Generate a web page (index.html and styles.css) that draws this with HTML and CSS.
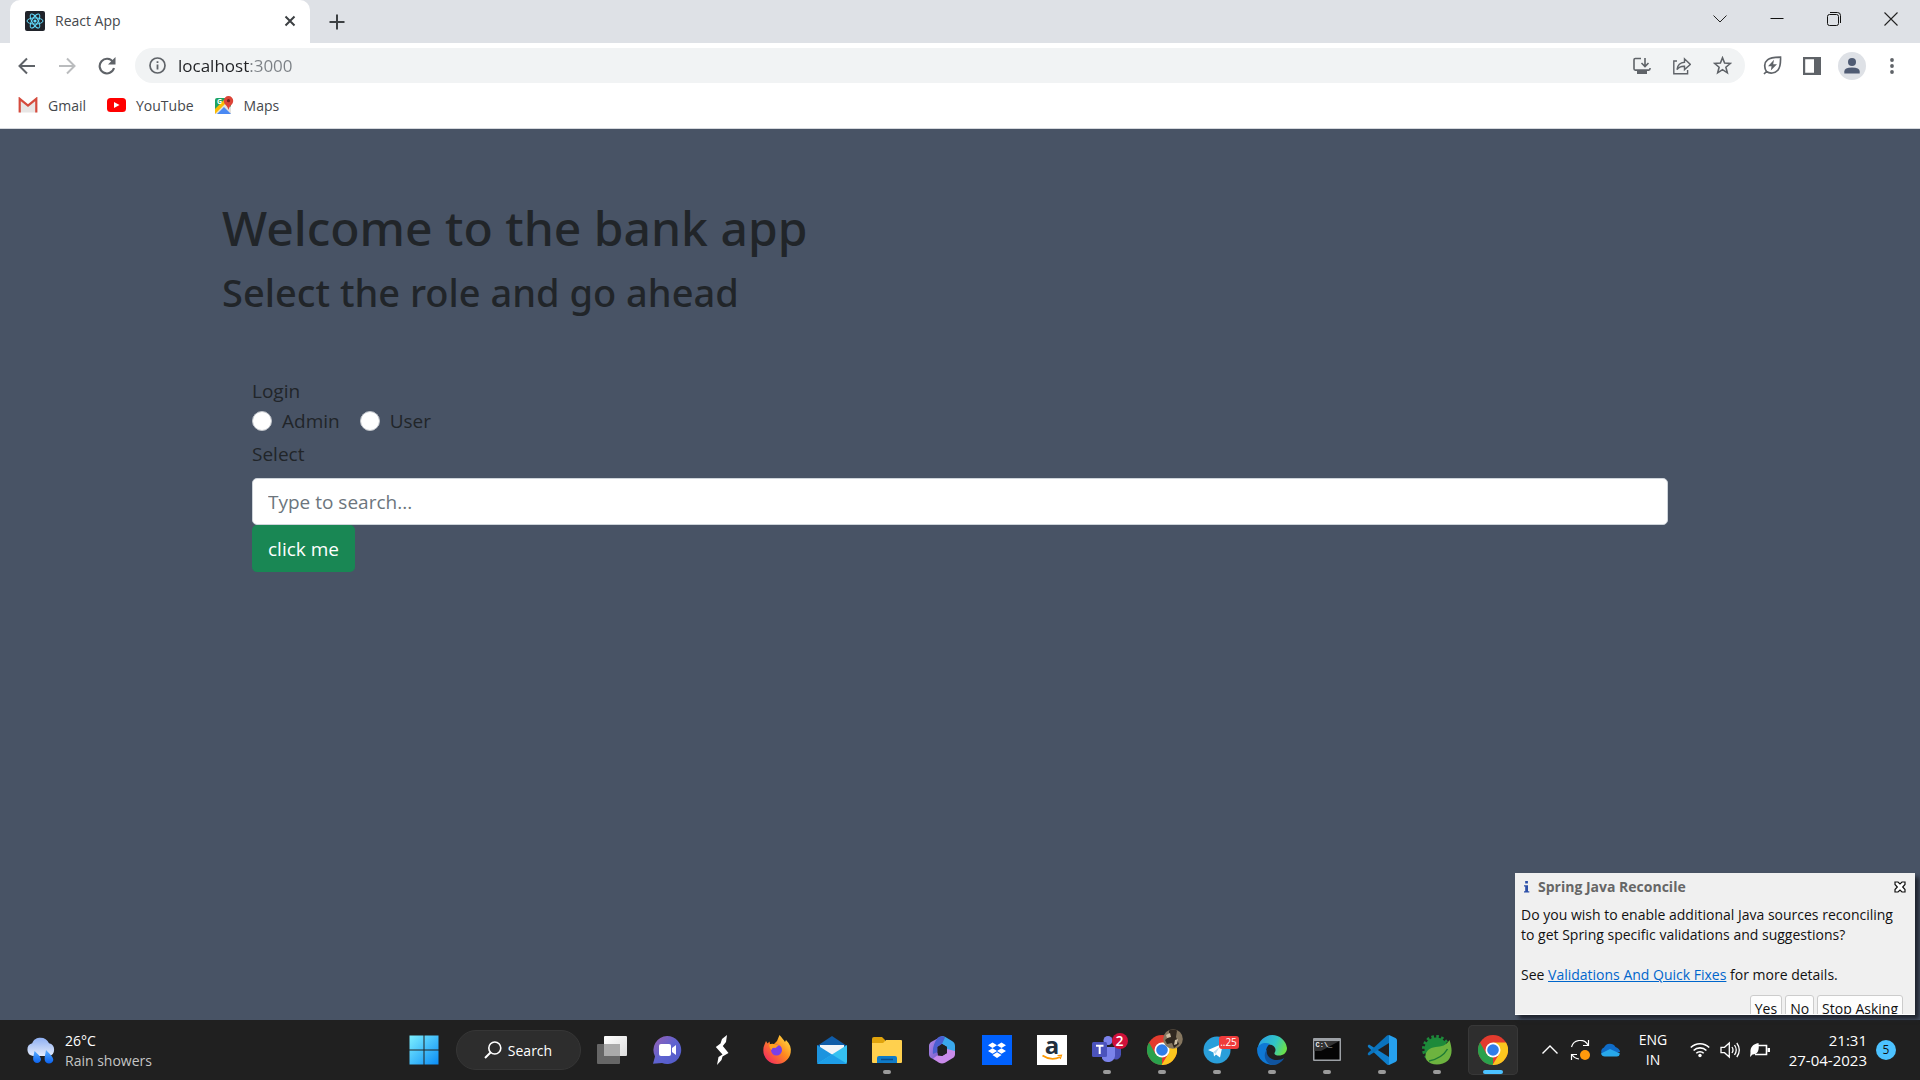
FILE: index.html
```html
<!DOCTYPE html>
<html lang="en">
<head>
<meta charset="utf-8">
<title>React App</title>
<link rel="stylesheet" href="styles.css">
</head>
<body>
<header class="browser">
  <div class="tabstrip">
    <div class="tab">
      <svg width="20" height="20" viewBox="0 0 20 20"><rect width="20" height="20" rx="2" fill="#20232a"/><g fill="none" stroke="#61dafb" stroke-width="1"><ellipse cx="10" cy="10" rx="8" ry="3.1"/><ellipse cx="10" cy="10" rx="8" ry="3.1" transform="rotate(60 10 10)"/><ellipse cx="10" cy="10" rx="8" ry="3.1" transform="rotate(120 10 10)"/></g><circle cx="10" cy="10" r="1.6" fill="#61dafb"/></svg>
      <span class="tab-title">React App</span>
      <button class="icon-btn tab-close" aria-label="Close tab"><svg width="12" height="12" viewBox="0 0 12 12"><path d="M1.5 1.5l9 9M10.500 1.500l-9 9" stroke="#3c4043" stroke-width="2"/></svg></button>
    </div>
    <button class="icon-btn new-tab" aria-label="New tab"><svg width="16" height="16" viewBox="0 0 16 16"><path d="M8 0.500v15M0.500 8h15" stroke="#3c4043" stroke-width="2"/></svg></button>
    <div class="window-controls">
      <button class="icon-btn" aria-label="Search tabs"><svg width="14" height="14" viewBox="0 0 14 14"><path d="M.5 3.500l6.500 6.500 6.500-6.500" fill="none" stroke="#222"/></svg></button>
      <button class="icon-btn" aria-label="Minimize"><svg width="14" height="14" viewBox="0 0 14 14"><path d="M.5 6.500h13" stroke="#111"/></svg></button>
      <button class="icon-btn" aria-label="Restore"><svg width="14" height="14" viewBox="0 0 14 14"><g fill="none" stroke="#111"><rect x=".5" y="2.500" width="11" height="11" rx="2"/><path d="M3 .5h7.500q3 0 3 3v7.500"/></g></svg></button>
      <button class="icon-btn" aria-label="Close"><svg width="14" height="14" viewBox="0 0 14 14"><path d="M.5.5l13 13M13.500.5l-13 13" stroke="#222" stroke-width="1.100"/></svg></button>
    </div>
  </div>
  <div class="toolbar">
    <nav class="nav-buttons">
      <button class="icon-btn" aria-label="Back"><svg width="18" height="18" viewBox="0 0 18 18"><path d="M17 9H2M9 1.500L1.500 9 9 16.500" fill="none" stroke="#5f6368" stroke-width="2"/></svg></button>
      <button class="icon-btn" aria-label="Forward"><svg width="18" height="18" viewBox="0 0 18 18"><path d="M1 9h15M9 1.500L16.500 9 9 16.500" fill="none" stroke="#babcbe" stroke-width="2"/></svg></button>
      <button class="icon-btn" aria-label="Reload"><svg width="18" height="18" viewBox="0 0 18 18"><path d="M15 5A7.300 7.300 0 1 0 16 11" fill="none" stroke="#5f6368" stroke-width="2.100"/><path d="M17.500 0v7.500H10z" fill="#5f6368"/></svg></button>
    </nav>
    <div class="omnibox">
      <svg width="17" height="17" viewBox="0 0 17 17"><circle cx="8.500" cy="8.500" r="7.500" fill="none" stroke="#5f6368" stroke-width="1.700"/><path d="M8.500 7.500v5M8.500 4.200v1.900" stroke="#5f6368" stroke-width="1.800"/></svg>
      <input class="url" type="text" value="localhost:3000" aria-label="Address">
      <div class="omni-actions">
        <button class="icon-btn" aria-label="Install"><svg width="18" height="18" viewBox="0 0 18 18"><g fill="none" stroke="#5f6368" stroke-width="1.600"><path d="M8 1.500H2.300q-1.300 0-1.300 1.300v9q0 1.300 1.300 1.300h13.400q1.300 0 1.300-1.300V11"/><path d="M12 1v8M8.500 6l3.500 3.500L15.500 6"/></g><path d="M4 13.500h10V17H4z" fill="#5f6368"/></svg></button>
        <button class="icon-btn" aria-label="Share"><svg width="18" height="18" viewBox="0 0 18 18"><g fill="none" stroke="#5f6368" stroke-width="1.400"><path d="M4 4H.8v12.700h13.800V13"/><path d="M4 12.500c.6-4.500 3-7 7.500-7.300V1.800l5.800 5.600-5.800 5.200V9.200C8 9 5.800 10 4 12.500z"/></g></svg></button>
        <button class="icon-btn" aria-label="Bookmark"><svg width="19" height="19" viewBox="0 0 19 19"><path d="M9.500 1.800l2.100 5.300 5.700.4-4.400 3.700 1.400 5.600-4.800-3.100-4.800 3.100 1.400-5.600L1.700 7.500l5.700-.4z" fill="none" stroke="#5f6368" stroke-width="1.600"/></svg></button>
      </div>
    </div>
    <div class="extensions">
      <button class="icon-btn" aria-label="Energy saver"><svg width="19" height="19" viewBox="0 0 19 19"><g fill="none" stroke="#5f6368" stroke-width="1.700"><path d="M3.500 15.500C1 12 1 6.500 4.500 3.800 7.500 1.300 12 1.300 17.500 1.200c.2 5.500.2 9.800-2.700 13-3 3.300-8 3.800-11.300 1.300zM3.500 15.500L1 18"/></g><path d="M11 3.800L5 10.200h3.600L7.800 14.500 14 8.200h-3.800z" fill="#5f6368"/></svg></button>
      <button class="icon-btn" aria-label="Side panel"><svg width="18" height="18" viewBox="0 0 18 18"><path d="M0 0h18v18H0zM2.200 2.200v13.600h8.800V2.200z" fill="#5f6368" fill-rule="evenodd"/></svg></button>
      <button class="icon-btn" aria-label="Profile"><svg width="28" height="28" viewBox="0 0 28 28"><circle cx="14" cy="14" r="14" fill="#dee1e6"/><circle cx="14" cy="10" r="4" fill="#4f5b73"/><path d="M6.300 21.500v-2q0-4 7.700-4t7.700 4v2z" fill="#4f5b73"/></svg></button>
      <button class="icon-btn" aria-label="Menu"><svg width="6" height="18" viewBox="0 0 6 18"><g fill="#5f6368"><circle cx="3" cy="3" r="1.900"/><circle cx="3" cy="9" r="1.900"/><circle cx="3" cy="15" r="1.900"/></g></svg></button>
    </div>
  </div>
  <nav class="bookmarks">
    <a href="#gmail"><svg width="20" height="16" viewBox="0 0 20 16"><path d="M1 2v12.500q0 1 1 1h16q1 0 1-1V2l-9 7z" fill="#e8e6e5"/><path d="M1.700 15.500V1.800L10 8.600l8.300-6.800v13.700" fill="none" stroke="#d54b3d" stroke-width="2.200"/></svg>Gmail</a>
    <a href="#youtube"><svg width="19" height="14" viewBox="0 0 19 14"><rect width="19" height="14" rx="3.500" fill="#f00"/><path d="M7 4v6l5.500-3z" fill="#fff"/></svg>YouTube</a>
    <a href="#maps"><svg width="19" height="19" viewBox="0 0 19 19"><rect y="2" width="16" height="16" rx="2" fill="#1ea362"/><path d="M0 17L11 6l5 5v7H0z" fill="#e5e3df"/><path d="M0 13l9-9 2 3L0 18z" fill="#fbbc04"/><path d="M2 18l7-7 7 7z" fill="#4a89f3"/><text class="maps-g" x="2" y="8">G</text><path d="M13.500 0a4.700 4.700 0 0 1 4.700 4.700c0 4-3.700 4.300-4.700 9.300-1-5-4.700-5.300-4.700-9.300A4.700 4.700 0 0 1 13.500 0z" fill="#dc4437"/><circle cx="13.500" cy="4.700" r="1.600" fill="#7b231e"/></svg>Maps</a>
  </nav>
</header>

<main class="page">
  <section class="container">
    <h1>Welcome to the bank app</h1>
    <h2>Select the role and go ahead</h2>
    <form class="login">
      <fieldset class="roles">
        <legend>Login</legend>
        <label><input type="radio" name="role"> Admin</label>
        <label><input type="radio" name="role"> User</label>
      </fieldset>
      <label class="select-label" for="search">Select</label>
      <input class="search" id="search" type="text" placeholder="Type to search...">
      <button class="submit" type="button">click me</button>
    </form>
  </section>

  <aside class="notice">
    <div class="notice-head">
      <svg width="7" height="14" viewBox="0 0 7 14"><path d="M2.200 1h2.700v2.500H2.200zM1 5.200h4v6h1.300v1.300H1v-1.300h1.200V6.500H1z" fill="#2c4fa8"/></svg>
      <strong>Spring Java Reconcile</strong>
      <button class="icon-btn" aria-label="Dismiss"><svg width="12" height="12" viewBox="0 0 12 12"><path d="M1 1h3l2 2 2-2h3v2.500L8.700 6 11 8.500V11H8L6 9l-2 2H1V8.500L3.300 6 1 3.500z" fill="#fff" stroke="#111" stroke-width="1.200"/></svg></button>
    </div>
    <p>Do you wish to enable additional Java sources reconciling<br>to get Spring specific validations and suggestions?</p>
    <p>See <a href="#validations">Validations And Quick Fixes</a> for more details.</p>
    <div class="notice-actions"><button>Yes</button><button>No</button><button>Stop Asking</button></div>
  </aside>
</main>

<footer class="taskbar">
  <div class="weather">
    <svg width="30" height="28" viewBox="0 0 30 28"><defs><linearGradient id="cl" x2="0" y2="1"><stop stop-color="#8fb0f3"/><stop offset="1" stop-color="#e3ebfb"/></linearGradient><linearGradient id="dr" x2="0" y2="1"><stop stop-color="#5cb0ff"/><stop offset="1" stop-color="#0a62f0"/></linearGradient></defs><path d="M7 19a6.500 6.500 0 0 1-.8-12.700C8 2 11 .8 14.500.8c4 0 7 2 8.500 5.500a6.500 6.500 0 0 1 0 12.700z" fill="url(#cl)"/><path d="M8.500 14c3 3 6.500 5.500 6.500 8.800a4 4 0 0 1-7.800 0c-.4-2.800.8-5 1.300-8.800zM20 13c3 3.500 7.300 6.500 7.300 10a4.400 4.400 0 0 1-8.600 0c-.4-3 .8-6 1.300-10z" fill="url(#dr)"/></svg>
    <div class="stack"><span>26°C</span><span class="dim">Rain showers</span></div>
  </div>

  <nav class="apps">
    <button class="app" aria-label="Start"><svg width="30" height="30" viewBox="0 0 30 30"><defs><linearGradient id="win" x2="1" y2="1"><stop stop-color="#7df0ff"/><stop offset="1" stop-color="#0a8cf5"/></linearGradient></defs><path d="M.5.5h14v14H.5zM15.500.5h14v14h-14zM.5 15.500h14v14H.5zM15.500 15.500h14v14h-14z" fill="url(#win)"/></svg></button>
    <button class="search-pill"><svg width="18" height="18" viewBox="0 0 18 18"><circle cx="10.800" cy="7" r="6" fill="none" stroke="#fff" stroke-width="1.600"/><path d="M6.500 11.500L1 17" stroke="#fff" stroke-width="2"/></svg>Search</button>
    <button class="app" aria-label="Task view"><svg width="30" height="28" viewBox="0 0 30 28"><defs><linearGradient id="tv" x2="1" y2="1"><stop stop-color="#fff"/><stop offset="1" stop-color="#ddd"/></linearGradient></defs><rect x="7" width="23" height="20" rx="1" fill="url(#tv)"/><rect y="8" width="23" height="20" rx="1" fill="#666"/><path d="M7 8h16v12H7z" fill="#aaa"/></svg></button>
    <button class="app" aria-label="Chat"><svg width="30" height="30" viewBox="0 0 30 30"><defs><linearGradient id="ch" x2="1" y2="1"><stop stop-color="#9a5fb0"/><stop offset=".5" stop-color="#5f63d0"/><stop offset="1" stop-color="#4f5ac8"/></linearGradient></defs><path d="M15 1a14 14 0 1 1-5 27l-9 .8 2-7.300A14 14 0 0 1 15 1z" fill="url(#ch)"/><rect x="7" y="9" width="12" height="12" rx="2" fill="#fff"/><path d="M20 13l4-3v10l-4-3z" fill="#fff"/></svg></button>
    <button class="app" aria-label="Stylus"><svg width="14" height="30" viewBox="0 0 14 30"><path d="M12 0L7 4 5.500 8.500 .8 12 7.500 19.500 3.500 22 2 30l4.500-5 1-3.500L13.500 18 7.800 11 11 7z" fill="#fff"/></svg></button>
    <button class="app" aria-label="Firefox"><svg width="30" height="30" viewBox="0 0 30 30"><defs><linearGradient id="ff" x1="1" x2="0" y2="1"><stop stop-color="#fff04a"/><stop offset=".45" stop-color="#ff8a1e"/><stop offset="1" stop-color="#f0146e"/></linearGradient></defs><path d="M4 6l1.500 2.500 2-2L8 9h4l3-3 2.500-6C20 3 22 5 23 7l1-2c4 4 5.500 8 4.700 12.500A13.700 13.700 0 0 1 15 29 13.700 13.700 0 0 1 1.300 15C1.300 11 3 9 4 6z" fill="url(#ff)"/><circle cx="14.500" cy="15" r="5.500" fill="#7a3fe8"/><path d="M7 10q3-2 6-.5l4 .5-3.500 3q-3.500-1-4 2-2-1.500-2.500-5z" fill="#ffa020"/></svg></button>
    <button class="app" aria-label="Mail"><svg width="30" height="28" viewBox="0 0 30 28"><path d="M0 10L15 0l15 10v4H0z" fill="#0f5ca8"/><path d="M3 9h24v10H3z" fill="#f1f4f8"/><path d="M0 9l30 19H2q-2 0-2-2z" fill="#1c94df"/><path d="M30 9L0 28h28q2 0 2-2z" fill="#35c1f1"/><path d="M15 18.500L0 28h28q1.500 0 1.500-.5z" fill="#1e9ee8"/></svg></button>
    <button class="app running" aria-label="File Explorer"><svg width="30" height="28" viewBox="0 0 30 28"><path d="M0 3q0-2 2-2h8l3 3v8H0z" fill="#e0a30c"/><path d="M0 7h11l3-3h15q1 0 1 1v21q0 1-1 1H1q-1 0-1-1z" fill="#ffd04e"/><path d="M5 27v-5q0-2 2-2h16q2 0 2 2v5z" fill="#0f7bc8"/><path d="M9 23.500h12" stroke="#0a4d8c" stroke-width="1.500"/></svg></button>
    <button class="app" aria-label="Microsoft 365"><svg width="28" height="30" viewBox="0 0 28 30"><defs><linearGradient id="m3" y2="1"><stop stop-color="#b58be8"/><stop offset="1" stop-color="#6a55c8"/></linearGradient></defs><path d="M14 1L4 6.500Q1 8 1 11v8q0 3 3 4.500l4 2 2-3.500-.5-10L14 9z" fill="url(#m3)"/><path d="M14 1q1.500 0 3 .8l7 4.200q3 1.500 3 5v9l-8-4v-4l-5-3z" fill="#3aa8ec"/><path d="M10 2.500q4-3 7 0L14 9l-4.500 3v5L5 19q-1-9 5-16.500z" fill="#4a5fd0"/><path d="M27 16v3q0 3-3 4.500l-7 4.300q-3 1.500-6 0l-6-4 4-3.300L14 21l5-3v-4z" fill="#c98bea"/><path d="M14 9l5 3v6l-5 3-4.500-3v-6z" fill="#202020"/></svg></button>
    <button class="app" aria-label="Dropbox"><svg width="30" height="30" viewBox="0 0 30 30"><path d="M0 0h30v30H0z" fill="#0061fe"/><path d="M10.500 7.500L15 10.300l-4.500 2.800L6 10.300zM19.500 7.500l4.500 2.800-4.500 2.800-4.500-2.800zM10.500 13.200L15 16l-4.500 2.800L6 16zM19.500 13.200L24 16l-4.500 2.800L15 16zM15 17.200l4.500 2.900-4.500 3-4.500-3z" fill="#fff"/></svg></button>
    <button class="app" aria-label="Amazon"><svg width="30" height="30" viewBox="0 0 30 30"><path d="M0 0h30v30H0z" fill="#fff"/><text class="amazon-a" x="15" y="19">a</text><path d="M5.500 20.500q9 6 17.500 1.500" fill="none" stroke="#f90" stroke-width="1.800"/><path d="M20.500 20.500l4-.3-1.300 3.800" fill="none" stroke="#f90" stroke-width="1.200"/></svg></button>
    <button class="app running" aria-label="Teams"><svg width="30" height="28" viewBox="0 0 30 28"><circle cx="16" cy="4.500" r="4.500" fill="#7b83eb"/><path d="M21 11h8v7.500a5 5 0 0 1-8 4z" fill="#4a50b8"/><path d="M10 11h13v9a7 7 0 0 1-13 2.500z" fill="#7b83eb"/><rect y="6" width="15" height="15" rx="1.500" fill="#4b53bc"/><path d="M4 9.700h7.500M7.700 9.700V18" stroke="#fff" stroke-width="2"/></svg><span class="badge round">2</span></button>
    <button class="app running" aria-label="Chrome profile"><svg width="30" height="30" viewBox="0 0 30 30"><use href="#chrome"/></svg><svg class="badge avatar" width="20" height="20" viewBox="0 0 20 20"><circle cx="10" cy="10" r="9.800" fill="#85765f"/><path d="M6 1.500a9.500 9.500 0 0 1 8 0L13 8l3 7-5 4-2-5-5 1-2-4 4-3z" fill="#302820"/><path d="M3 6l4-2 1 4-4 1zM12 11l3-1-1 5-3 1z" fill="#cdbfa5"/></svg></button>
    <button class="app running" aria-label="Telegram"><svg width="30" height="30" viewBox="0 0 30 30"><circle cx="15" cy="15" r="13.500" fill="#2a9fda"/><path d="M6 15l15-6.500-3 14-4-3-2 2-.5-4z" fill="#fff"/><path d="M11.500 17l6-5-4 7z" fill="#b9dcef"/></svg><span class="badge wide">..25</span></button>
    <button class="app running" aria-label="Edge"><svg width="30" height="30" viewBox="0 0 30 30"><defs><linearGradient id="eg" y1=".2" x2="1" y2=".5"><stop stop-color="#2a9ee8"/><stop offset=".6" stop-color="#31c5c5"/><stop offset="1" stop-color="#6be04a"/></linearGradient></defs><path d="M15 0a15 15 0 0 1 15 13c0 5-4 7.500-8 7.500-3 0-5-1-4.500-2.500 1.500-2 1.500-5-1-7C12 8 4 9 .8 13.500A15 15 0 0 1 15 0z" fill="url(#eg)"/><path d="M.2 13C2 9 8 6.500 13 9c-3 2-4 4.500-4 8 0 6 5 11 11 12A15 15 0 0 1 .2 13z" fill="#0f78d4"/><path d="M10.500 14C8 19 12 25 20 25c3 0 5.500-1 7.300-2A15 15 0 0 1 17 30C8 30 5 19 10.500 14z" fill="#10549f"/></svg></button>
    <button class="app running" aria-label="Command Prompt"><svg width="28" height="24" viewBox="0 0 28 24"><rect width="28" height="23" rx="1" fill="#9da1a6"/><path d="M1.500 3h25v18.500h-25z" fill="#050505"/><path d="M1.500 3h25L8 13H1.500z" fill="#333"/><text class="cmd" x="2.500" y="9">C:\_</text></svg></button>
    <button class="app running" aria-label="Visual Studio Code"><svg width="30" height="30" viewBox="0 0 30 30"><path d="M2 9.500q-2 1-1 2.500l19 17.500q1 .5 2 .5V22z" fill="#0f7fcc"/><path d="M2 20.500q-2-1-1-2.500L20 .5q1-.5 2-.5v8z" fill="#0a73bd"/><path d="M22 0l6.500 3Q30 3.800 30 5.300v19.400q0 1.500-1.500 2.300L22 30z" fill="#26a0ee"/></svg></button>
    <button class="app running" aria-label="Spring Tools"><svg width="30" height="30" viewBox="0 0 30 30"><circle cx="14" cy="14" r="12.500" fill="none" stroke="#1d8a3a" stroke-width="3" stroke-dasharray="2.600 2.300"/><circle cx="14" cy="14" r="11.500" fill="#1d8a3a"/><path d="M27.500 5c3 9 3 15-1.500 20.500C20 31 9 31 4.500 25c-3-6 1-12 9-13 6-.5 11-1.500 14-7z" fill="#6db33f"/><path d="M7 26c7-1.500 14-4 18.500-12" fill="none" stroke="#1d7a35" stroke-width="1.500"/></svg></button>
    <button class="app running active" aria-label="Chrome"><svg width="30" height="30" viewBox="0 0 30 30"><g id="chrome"><circle cx="15" cy="15" r="15" fill="#e33b2e"/><path d="M2 7.500L8.500 19 15 22.500 15 30A15 15 0 0 1 2 7.500z" fill="#2aa14c"/><path d="M15 7.500h13A15 15 0 0 1 14.500 30l7-11.500z" fill="#fcc61e"/><circle cx="15" cy="15" r="7.500" fill="#fff"/><circle cx="15" cy="15" r="5.800" fill="#2f7de9"/></g></svg></button>
  </nav>

  <div class="tray">
    <div class="tray-icons">
      <svg width="20" height="20" viewBox="0 0 20 20"><path d="M2.500 13.500L10 6l7.500 7.500" fill="none" stroke="#fff" stroke-width="1.400"/></svg>
      <svg width="20" height="20" viewBox="0 0 20 20"><path d="M1.500 7A9 9 0 0 1 18 5M18.500 0v5.500H13M1.500 20v-5.500H7M2 14.500A9 9 0 0 0 9 19" fill="none" stroke="#fff" stroke-width="1.200"/><circle cx="15" cy="15" r="5" fill="#ff9a0c"/></svg>
      <svg width="20" height="14" viewBox="0 0 20 14"><path d="M4.500 13A4.500 4.500 0 0 1 4 4.500 6.500 6.500 0 0 1 15.500 4c3 1 4.500 3 4.500 5z" fill="#0f6cc8"/><path d="M5 13.500a4 4 0 0 1-4-3L10 6l10 4.500a3.500 3.500 0 0 1-3 3z" fill="#28a8ea"/></svg>
    </div>
    <div class="stack lang"><span>ENG</span><span>IN</span></div>
    <div class="tray-icons">
      <svg width="20" height="20" viewBox="0 0 20 20"><g fill="none" stroke="#fff" stroke-width="1.600"><path d="M.8 7.500a13 13 0 0 1 18.400 0M3.600 10.500a9 9 0 0 1 12.800 0M6.300 13.300a5.200 5.200 0 0 1 7.400 0"/></g><circle cx="10" cy="15.500" r="1.700" fill="#fff"/></svg>
      <svg width="20" height="20" viewBox="0 0 20 20"><g fill="none" stroke="#fff" stroke-width="1.300"><path d="M1 7.300h3.500L9.300 3v14l-4.800-4.300H1zM12 7q2 3 0 6M14.500 5q3.500 5 0 10M16.800 3q5 7 0 14"/></g></svg>
      <svg width="20" height="16" viewBox="0 0 20 16"><path d="M8 3.500h8.500v9H5" fill="none" stroke="#fff" stroke-width="1.600"/><path d="M17.500 6H20v4h-2.500zM8.500 1C3 2 0 5 .5 11L0 15l2.500-2.500C8 12.500 9.500 8 8.500 1z" fill="#fff"/></svg>
    </div>
    <div class="clock"><div class="stack end"><span>21:31</span><span>27-04-2023</span></div><span class="count">5</span></div>
  </div>
</footer>
</body>
</html>
```
FILE: styles.css
```css
* { box-sizing: border-box; }
body {
  margin: 0;
  min-height: 100vh;
  display: flex;
  flex-direction: column;
  font-family: "Open Sans", "Noto Sans", sans-serif;
  font-size: 14px;
  color: #212529;
  background: #485365;
}
button, input { font: inherit; color: inherit; }
svg { display: block; flex: none; }
.icon-btn {
  display: flex;
  align-items: center;
  justify-content: center;
  padding: 0;
  border: 0;
  background: none;
}

/* Browser chrome */
.browser { background: #fff; border-bottom: 1px solid #d5d8dd; }
.tabstrip { display: flex; height: 43px; padding-left: 10px; background: #dee1e6; }
.tab {
  display: flex;
  align-items: center;
  width: 300px;
  padding: 0 14px 2px 15px;
  gap: 10px;
  border-radius: 10px 10px 0 0;
  background: #fff;
  color: #45484c;
}
.tab-title { flex: 1; }
.new-tab { width: 54px; }
.window-controls { display: flex; margin-left: auto; height: 38px; padding-right: 1px; }
.window-controls .icon-btn { width: 57px; }
.toolbar { display: flex; align-items: center; height: 45px; padding: 0 8px 0 7px; }
.nav-buttons { display: flex; width: 128px; }
.nav-buttons .icon-btn { width: 40px; height: 40px; }
.omnibox {
  display: flex;
  align-items: center;
  flex: 1;
  height: 35px;
  padding: 0 13px 0 14px;
  gap: 12px;
  border-radius: 18px;
  background: #f1f3f4;
}
.url {
  flex: 1;
  height: 30px;
  padding: 0;
  border: 0;
  outline: 0;
  font-size: 17px;
  color: transparent;
  background: linear-gradient(to right, #202124 72px, #7b8085 72px);
  -webkit-background-clip: text;
  background-clip: text;
}
.omni-actions { display: flex; gap: 22px; }
.extensions { display: flex; margin-left: 7px; }
.extensions .icon-btn { width: 40px; }
.bookmarks {
  display: flex;
  align-items: center;
  height: 40px;
  padding: 0 18px 6px;
  gap: 21px;
}
.bookmarks a {
  display: flex;
  align-items: center;
  gap: 10px;
  color: #45484c;
  text-decoration: none;
}
.maps-g { font: bold 7px "Open Sans", sans-serif; fill: #fff; }

/* Application page */
.page { position: relative; flex: 1; }
.container { padding: 69px 222px 40px; }
h1, h2 {
  margin: 0;
  font-family: "Noto Sans", sans-serif;
  font-weight: 500;
  line-height: 60px;
}
h1 { font-size: 48px; }
h2 { font-size: 38px; margin-top: 4px; }
.login {
  display: flex;
  flex-direction: column;
  align-items: flex-start;
  padding: 54px 30px 0;
  font-size: 19px;
  line-height: 30px;
}
.roles {
  display: flex;
  gap: 20px;
  margin: 0;
  padding: 0;
  border: 0;
}
.roles legend { padding: 0; }
.roles label { display: flex; align-items: center; gap: 10px; }
.roles input {
  appearance: none;
  width: 20px;
  height: 20px;
  margin: 0;
  border: 1px solid #bfc3c9;
  border-radius: 50%;
  background: #fff;
}
.select-label { margin: 3px 0 9px; }
.search {
  width: 100%;
  height: 47px;
  padding: 0 15px;
  border: 1px solid #ced4da;
  border-radius: 5px;
  background: #fff;
}
.search::placeholder { color: #6c757d; opacity: 1; }
.submit {
  height: 47px;
  padding: 0 16px;
  border: 0;
  border-radius: 5px;
  background: #198754;
  color: #fff;
}

/* Desktop notification */
.notice {
  position: absolute;
  right: 5px;
  bottom: 5px;
  width: 400px;
  height: 142px;
  padding: 4px 12px 0 6px;
  overflow: hidden;
  border-bottom: 1px solid #fff;
  background: #f0f0f0;
  box-shadow: 4px 4px 4px #1f242e;
  line-height: 20px;
  color: #111;
}
.notice-head { display: flex; align-items: center; gap: 8px; padding-left: 2px; color: #666; }
.notice-head .icon-btn { margin-left: auto; margin-right: -3px; }
.notice p { margin: 0 0 20px; white-space: nowrap; }
.notice-head + p { margin-top: 8px; }
.notice a { color: #0066cc; }
.notice-actions { display: flex; justify-content: flex-end; gap: 3px; margin-top: -10px; }
.notice-actions button {
  height: 28px;
  padding: 0 4px;
  border: 1px solid #ccc;
  border-radius: 3px;
  background: #fdfdfd;
}

/* Windows taskbar */
.taskbar {
  display: grid;
  grid-template-columns: 1fr auto 1fr;
  height: 60px;
  background: #202020;
  color: #fff;
}
.weather { display: flex; align-items: center; gap: 9px; padding: 2px 0 0 26px; }
.stack { display: flex; flex-direction: column; line-height: 20px; }
.dim { color: #c5c5c5; }
.apps { display: flex; align-items: center; padding-right: 6px; }
.app {
  position: relative;
  display: flex;
  align-items: center;
  justify-content: center;
  width: 55px;
  height: 60px;
  padding: 0;
  border: 0;
  background: none;
}
.running::after {
  content: "";
  position: absolute;
  bottom: 6px;
  width: 8px;
  height: 4px;
  border-radius: 2px;
  background: #9a9a9a;
}
.active {
  width: 50px;
  height: 50px;
  margin-left: 3px;
  border-radius: 5px;
  background: #2e2e2e;
  box-shadow: inset 0 0 0 1px #383838;
}
.active::after { bottom: 1px; width: 20px; background: #4cc2ff; }
.search-pill {
  display: flex;
  align-items: center;
  justify-content: center;
  gap: 6px;
  width: 125px;
  height: 40px;
  margin: 0 4px;
  border: 1px solid #363636;
  border-radius: 20px;
  background: #2d2d2d;
}
.badge { position: absolute; }
.avatar { top: 9px; right: 7px; }
.round, .wide {
  top: 13px;
  height: 16px;
  border-radius: 8px;
  background: #d0103a;
  line-height: 16px;
}
.round { right: 7px; width: 16px; font-weight: 600; }
.wide {
  top: 16px;
  right: 6px;
  width: 20px;
  height: 13px;
  border-radius: 3px;
  background: #ef3b3b;
  font-size: 10px;
  line-height: 13px;
}
.amazon-a { font: bold 24px "Open Sans", sans-serif; text-anchor: middle; fill: #222f3e; }
.cmd { font: bold 7px "Liberation Mono", monospace; fill: #eee; }
.tray { display: flex; align-items: center; justify-content: flex-end; padding-right: 24px; }
.tray-icons { display: flex; align-items: center; gap: 10px; }
.lang { width: 70px; padding-right: 4px; text-align: center; }
.clock { display: flex; align-items: center; gap: 9px; width: 126px; justify-content: flex-end; }
.end { text-align: right; font-size: 15px; }
.count {
  width: 20px;
  height: 20px;
  border-radius: 50%;
  background: #4cc2ff;
  color: #111;
  font-size: 12px;
  line-height: 20px;
  text-align: center;
}
```
